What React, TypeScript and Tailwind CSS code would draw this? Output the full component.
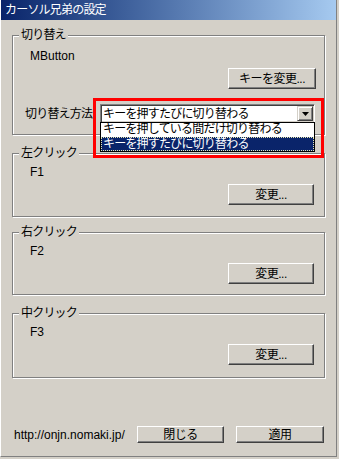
import { ReactNode } from "react";

const font = "font-['Liberation_Sans','Noto_Sans_CJK_JP',sans-serif]";

function Group({
  label,
  className,
  children,
}: {
  label: string;
  className?: string;
  children?: ReactNode;
}) {
  return (
    <div
      className={`relative w-[313px] border border-[#808080] shadow-[inset_1px_1px_0_#ffffff,1px_1px_0_#ffffff] ${className ?? ""}`}
    >
      <span className="absolute left-[6px] top-[-8px] bg-[#d4d0c8] px-[2px] leading-[14px] tracking-[-0.8px]">
        {label}
      </span>
      {children}
    </div>
  );
}

function Btn({ label, className }: { label: string; className?: string }) {
  return (
    <button
      type="button"
      className={`flex items-center justify-center border border-t-white border-l-white border-r-[#404040] border-b-[#404040] bg-[#d4d0c8] leading-[14px] tracking-[-0.5px] shadow-[inset_-1px_-1px_0_#808080] ${className ?? ""}`}
    >
      {label}
    </button>
  );
}

function KeyGroup({
  label,
  keyName,
  className,
}: {
  label: string;
  keyName: string;
  className?: string;
}) {
  return (
    <Group label={label} className={className}>
      <div className="pl-[17px] pt-[11px] leading-[14px]">{keyName}</div>
      <div className="mt-[5px] flex justify-end pr-[10px]">
        <Btn label="変更..." className="h-[21px] w-[86px]" />
      </div>
    </Group>
  );
}

export default function App() {
  return (
    <div
      className={`h-[459px] w-[339px] overflow-hidden bg-[#d4d0c8] text-[12px] text-black ${font}`}
    >
      <div className="h-[457px] w-[337px] border-l border-r border-b border-l-white border-r-[#808080] border-b-[#808080]">
        <div className="flex h-[20px] items-center bg-gradient-to-r from-[#0a246a] to-[#a6caf0] pl-[4px] text-white tracking-[-0.8px]">
          カーソル兄弟の設定
        </div>

        <div className="flex flex-col pl-[11px]">
          <Group label="切り替え" className="mt-[15px] h-[100px]">
            <div className="pl-[17px] pt-[13px] leading-[14px]">MButton</div>
            <div className="mt-[5px] flex justify-end pr-[8px]">
              <Btn label="キーを変更..." className="h-[21px] w-[88px]" />
            </div>
            <div className="mt-[15px] flex items-center pl-[12px]">
              <span className="w-[75px] leading-[14px] tracking-[-0.8px]">
                切り替え方法:
              </span>
              <div className="relative">
                <div className="flex h-[19px] w-[215px] items-center border border-t-[#808080] border-l-[#808080] border-r-white border-b-white shadow-[inset_1px_1px_0_#404040,inset_-1px_-1px_0_#d4d0c8] bg-white pl-[2px]">
                  <span className="flex-1 leading-[14px] tracking-[-0.8px]">
                    キーを押すたびに切り替わる
                  </span>
                  <div className="mr-[1px] flex h-[15px] w-[16px] items-center justify-center border border-t-[#d4d0c8] border-l-[#d4d0c8] border-r-[#404040] border-b-[#404040] bg-[#d4d0c8] shadow-[inset_1px_1px_0_#ffffff,inset_-1px_-1px_0_#808080]">
                    <svg width="7" height="4" viewBox="0 0 7 4">
                      <path d="M0 0h7L3.5 4z" fill="#000" />
                    </svg>
                  </div>
                </div>
                <div className="absolute left-0 top-[18px] z-10 w-[215px] border border-black bg-white">
                  <div className="h-[14px] pl-[2px] leading-[13px] tracking-[-0.8px]">
                    キーを押している間だけ切り替わる
                  </div>
                  <div className="h-[14px] border border-dotted border-[#e8e8b0] bg-[#0a246a] pl-[1px] leading-[12px] text-white tracking-[-0.8px]">
                    キーを押すたびに切り替わる
                  </div>
                </div>
              </div>
            </div>
          </Group>

          <KeyGroup label="左クリック" keyName="F1" className="mt-[18px] h-[64px]" />
          <KeyGroup label="右クリック" keyName="F2" className="mt-[15px] h-[63px]" />
          <KeyGroup label="中クリック" keyName="F3" className="mt-[18px] h-[65px]" />
        </div>

        <div className="mt-[48px] flex items-center pl-[13px]">
          <span className="w-[123px] leading-[14px]">http://onjn.nomaki.jp/</span>
          <Btn label="閉じる" className="h-[17px] w-[87px]" />
          <Btn label="適用" className="ml-[12px] h-[17px] w-[88px]" />
        </div>
      </div>

      <div className="pointer-events-none absolute left-[93px] top-[98px] z-20 h-[60px] w-[231px] border-[3px] border-[#ff0000]" />
    </div>
  );
}
